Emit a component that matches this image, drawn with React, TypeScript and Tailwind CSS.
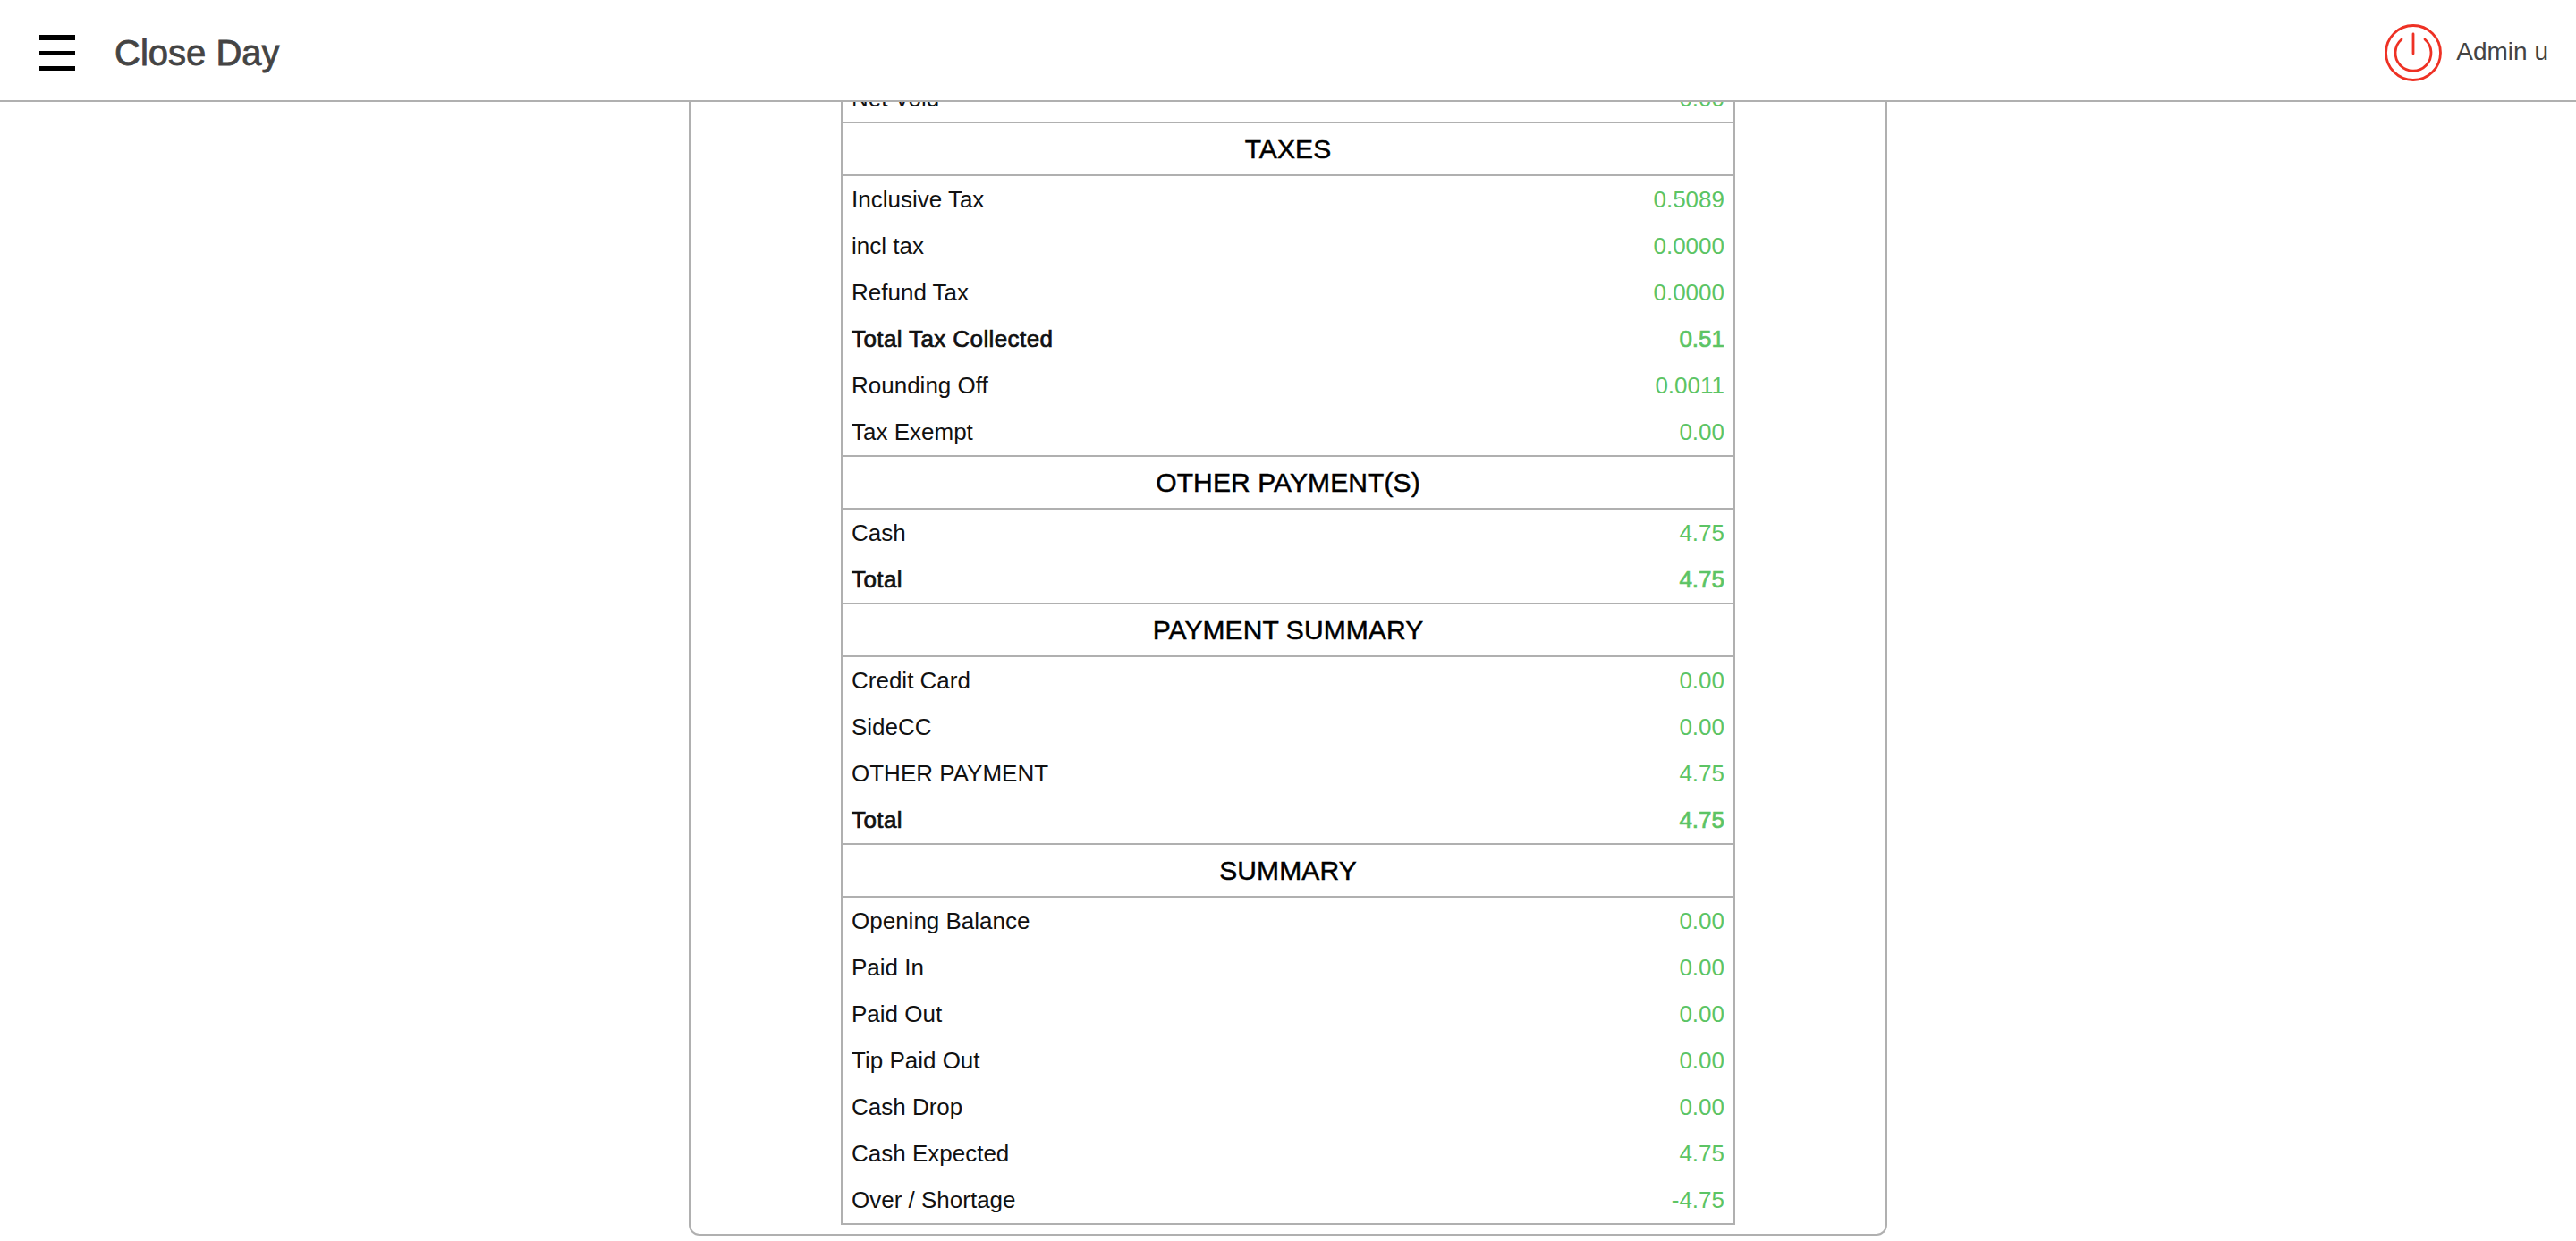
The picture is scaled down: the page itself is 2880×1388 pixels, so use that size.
const SECTIONS = [
    {
        title: "TAXES",
        rows: [
            { label: "Inclusive Tax", value: "0.5089" },
            { label: "incl tax", value: "0.0000" },
            { label: "Refund Tax", value: "0.0000" },
            { label: "Total Tax Collected", value: "0.51", bold: true },
            { label: "Rounding Off", value: "0.0011" },
            { label: "Tax Exempt", value: "0.00" },
        ],
    },
    {
        title: "OTHER PAYMENT(S)",
        rows: [
            { label: "Cash", value: "4.75" },
            { label: "Total", value: "4.75", bold: true },
        ],
    },
    {
        title: "PAYMENT SUMMARY",
        rows: [
            { label: "Credit Card", value: "0.00" },
            { label: "SideCC", value: "0.00" },
            { label: "OTHER PAYMENT", value: "4.75" },
            { label: "Total", value: "4.75", bold: true },
        ],
    },
    {
        title: "SUMMARY",
        rows: [
            { label: "Opening Balance", value: "0.00" },
            { label: "Paid In", value: "0.00" },
            { label: "Paid Out", value: "0.00" },
            { label: "Tip Paid Out", value: "0.00" },
            { label: "Cash Drop", value: "0.00" },
            { label: "Cash Expected", value: "4.75" },
            { label: "Over / Shortage", value: "-4.75" },
        ],
    },
];

function Row({ label, value, bold }: { label: string; value: string; bold?: boolean }) {
    return (
        <div className={`flex h-[52px] items-center justify-between px-[10px] text-[26px] ${bold ? "[-webkit-text-stroke:0.7px]" : ""}`}>
            <span className={`text-[#111] ${bold ? "tracking-[0.4px]" : ""}`}>{label}</span>
            <span className="text-[#5cc464]">{value}</span>
        </div>
    );
}

export default function App() {
    return (
        <div className="flex h-screen flex-col overflow-hidden bg-white font-['Liberation_Sans',Arial,sans-serif]">
            <header className="flex h-[114px] shrink-0 items-center justify-between border-b-2 border-[#b0b0b0] bg-white pt-[6px]">
                <div className="flex items-center">
                    <div className="ml-[44px] flex h-[40px] w-[40px] flex-col justify-between">
                        <div className="h-[6px] bg-black" />
                        <div className="h-[5px] bg-black" />
                        <div className="h-[5px] bg-black" />
                    </div>
                    <h1 className="ml-[44px] text-[40px] text-[#444] [-webkit-text-stroke:0.8px]">Close Day</h1>
                </div>
                <div className="flex items-center">
                    <svg className="-mt-[1px]" width="66" height="66" viewBox="0 0 66 66" fill="none" stroke="#ee3124" strokeWidth="2.8" strokeLinecap="round">
                        <circle cx="33" cy="33" r="30.5" />
                        <path d="M20 18a20 20 0 1 0 26 0" />
                        <path d="M33 12v22" />
                    </svg>
                    <span className="ml-[15px] mr-[31px] mb-[2px] text-[28px] text-[#444]">Admin u</span>
                </div>
            </header>
            <main className="flex min-h-0 flex-1 flex-col justify-end overflow-hidden pb-[6px]">
                <div className="mx-auto w-[1340px] shrink-0 rounded-b-[12px] border-x-2 border-b-2 border-[#b0b0b0] pb-[10px]">
                    <div className="mx-auto w-[1000px] border-x-2 border-b-2 border-[#b0b0b0]">
                        <Row label="Net Void" value="0.00" />
                        {SECTIONS.map((section) => (
                            <div key={section.title}>
                                <div className="flex h-[61px] items-center justify-center border-y-2 border-[#b0b0b0] text-[30px] tracking-[0.1px] text-black [-webkit-text-stroke:0.5px]">
                                    {section.title}
                                </div>
                                {section.rows.map((row) => (
                                    <Row key={row.label} {...row} />
                                ))}
                            </div>
                        ))}
                    </div>
                </div>
            </main>
        </div>
    );
}
